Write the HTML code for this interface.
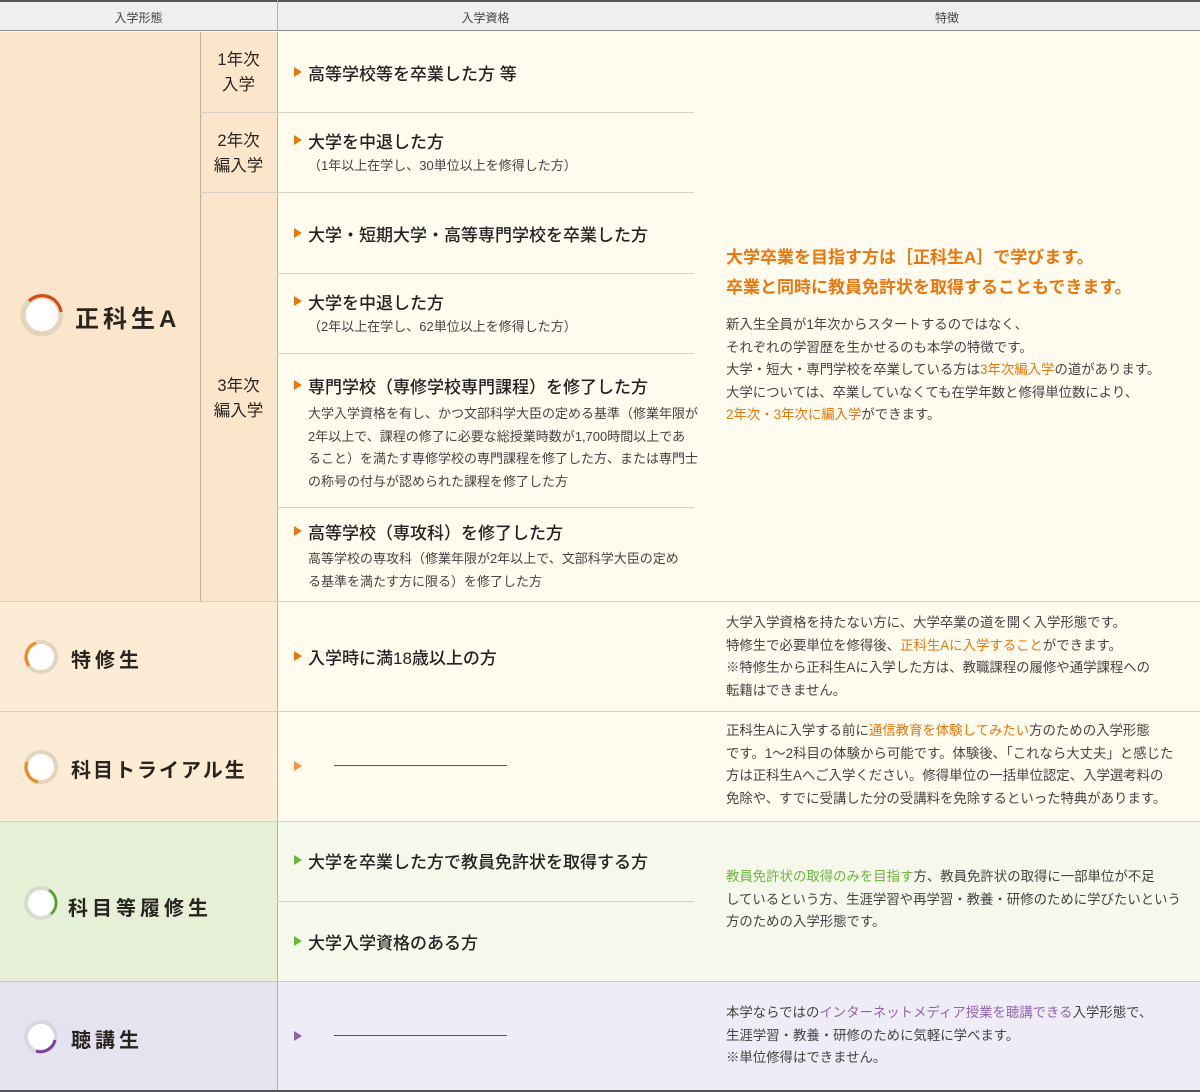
<!DOCTYPE html>
<html><head><meta charset="utf-8"><style>
*{margin:0;padding:0;box-sizing:border-box}
body{width:1200px;height:1092px;position:relative;background:#fffbee;font-family:"Liberation Sans","Noto Sans CJK JP",sans-serif;color:#333;overflow:hidden}
.a{position:absolute}
.hl{position:absolute;height:1px;background:#d6cfc2}
.vl{position:absolute;width:1px;background:#b9b0a2}
.it{position:absolute;left:308px;font-size:17px;font-weight:500;color:#222;white-space:nowrap}
.tri{position:absolute;left:294px;width:0;height:0;border-top:5.5px solid transparent;border-bottom:5.5px solid transparent;border-left:8px solid #e8770e}
.sub{position:absolute;left:308px;font-size:13px;color:#444;line-height:22.5px}
.r{position:absolute;left:726px;font-size:13.4px;color:#444;line-height:22.5px;white-space:nowrap}
.o{color:#e8770e}.g{color:#6db53b}.p{color:#9063a9}
.nm{position:absolute;font-size:20px;font-weight:bold;color:#2a2420;letter-spacing:4px;white-space:nowrap}
.yr{position:absolute;left:200px;width:77px;text-align:center;font-size:16.5px;color:#2a2420;line-height:25px}
</style></head><body>
<div class="a" style="left:0;top:0;width:1200px;height:31px;background:#efefef;border-top:2px solid #555;border-bottom:1px solid #888"></div>
<div class="a" style="left:0;top:9px;width:277px;text-align:center;font-size:12px;color:#444">入学形態</div>
<div class="a" style="left:277px;top:9px;width:417px;text-align:center;font-size:12px;color:#444">入学資格</div>
<div class="a" style="left:694px;top:9px;width:506px;text-align:center;font-size:12px;color:#444">特徴</div>
<div class="vl" style="left:277px;top:0;height:31px"></div>

<div class="a" style="left:0;top:32px;width:277px;height:569px;background:#fbe6cb"></div>
<div class="a" style="left:0;top:601px;width:277px;height:220px;background:#fcecd6"></div>
<div class="a" style="left:0;top:821px;width:277px;height:160px;background:#e6f0d7"></div>
<div class="a" style="left:277px;top:821px;width:923px;height:160px;background:#f5f8eb"></div>
<div class="a" style="left:0;top:981px;width:277px;height:111px;background:#e6e3f1"></div>
<div class="a" style="left:277px;top:981px;width:923px;height:111px;background:#eeecf6"></div>

<div class="vl" style="left:200px;top:32px;height:569px"></div>
<div class="vl" style="left:277px;top:32px;height:1060px"></div>
<div class="hl" style="left:200px;top:112px;width:494px"></div>
<div class="hl" style="left:200px;top:192px;width:494px"></div>
<div class="hl" style="left:277px;top:273px;width:417px"></div>
<div class="hl" style="left:277px;top:353px;width:417px"></div>
<div class="hl" style="left:277px;top:507px;width:417px"></div>
<div class="hl" style="left:0;top:601px;width:1200px"></div>
<div class="hl" style="left:0;top:711px;width:1200px"></div>
<div class="hl" style="left:0;top:821px;width:1200px"></div>
<div class="hl" style="left:277px;top:901px;width:417px"></div>
<div class="hl" style="left:0;top:981px;width:1200px;background:#c9c4d6"></div>
<div class="a" style="left:0;top:1090px;width:1200px;height:2px;background:#555"></div>

<svg class="a" style="left:19px;top:292px" width="46" height="46" viewBox="0 0 46 46"><circle cx="23" cy="23" r="19" fill="none" stroke="#e2d4bf" stroke-width="5"/><circle cx="23" cy="23" r="16" fill="#fff"/><path d="M10 9 A19 19 0 0 1 42 20" fill="none" stroke="#d9480f" stroke-width="3"/></svg>
<svg class="a" style="left:22px;top:638px" width="38" height="38" viewBox="0 0 38 38"><circle cx="19" cy="19" r="15" fill="none" stroke="#e2d4bf" stroke-width="4"/><circle cx="19" cy="19" r="13" fill="#fff"/><path d="M7 28 A15 15 0 0 1 14 5" fill="none" stroke="#f08a1c" stroke-width="3"/></svg>
<svg class="a" style="left:22px;top:748px" width="38" height="38" viewBox="0 0 38 38"><circle cx="19" cy="19" r="15" fill="none" stroke="#e2d4bf" stroke-width="4"/><circle cx="19" cy="19" r="13" fill="#fff"/><path d="M5 14 A15 15 0 0 0 16 34" fill="none" stroke="#f08a1c" stroke-width="3"/></svg>
<svg class="a" style="left:22px;top:884px" width="38" height="38" viewBox="0 0 38 38"><circle cx="19" cy="19" r="15" fill="none" stroke="#d6dccd" stroke-width="4"/><circle cx="19" cy="19" r="13" fill="#fff"/><path d="M27 6 A15 15 0 0 1 29 30" fill="none" stroke="#4fa12b" stroke-width="2.5"/></svg>
<svg class="a" style="left:22px;top:1018px" width="38" height="38" viewBox="0 0 38 38"><circle cx="19" cy="19" r="15" fill="none" stroke="#d8d6e0" stroke-width="4"/><circle cx="19" cy="19" r="13" fill="#fff"/><path d="M33 22 A15 15 0 0 1 14 33" fill="none" stroke="#7a3f99" stroke-width="3"/></svg>

<div class="nm" style="left:75px;top:299px;font-size:24px">正科生A</div>
<div class="nm" style="left:71px;top:644px">特修生</div>
<div class="nm" style="left:71px;top:754px;letter-spacing:2px">科目トライアル生</div>
<div class="nm" style="left:68px;top:892px">科目等履修生</div>
<div class="nm" style="left:71px;top:1024px">聴講生</div>

<div class="yr" style="top:48px">1年次<br>入学</div>
<div class="yr" style="top:129px">2年次<br>編入学</div>
<div class="yr" style="top:374px">3年次<br>編入学</div>

<div class="tri" style="top:67px"></div><div class="it" style="top:60px">高等学校等を卒業した方 等</div>
<div class="tri" style="top:135px"></div><div class="it" style="top:128px">大学を中退した方</div>
<div class="sub" style="top:155px">（1年以上在学し、30単位以上を修得した方）</div>
<div class="tri" style="top:228px"></div><div class="it" style="top:221px">大学・短期大学・高等専門学校を卒業した方</div>
<div class="tri" style="top:296px"></div><div class="it" style="top:289px">大学を中退した方</div>
<div class="sub" style="top:316px">（2年以上在学し、62単位以上を修得した方）</div>
<div class="tri" style="top:380px"></div><div class="it" style="top:373px">専門学校（専修学校専門課程）を修了した方</div>
<div class="sub" style="top:403px;width:390px">大学入学資格を有し、かつ文部科学大臣の定める基準（修業年限が2年以上で、課程の修了に必要な総授業時数が1,700時間以上であること）を満たす専修学校の専門課程を修了した方、または専門士の称号の付与が認められた課程を修了した方</div>
<div class="tri" style="top:526px"></div><div class="it" style="top:519px">高等学校（専攻科）を修了した方</div>
<div class="sub" style="top:548px;width:380px">高等学校の専攻科（修業年限が2年以上で、文部科学大臣の定める基準を満たす方に限る）を修了した方</div>

<div class="tri" style="top:651px"></div><div class="it" style="top:644px">入学時に満18歳以上の方</div>
<div class="tri" style="top:761px;border-left-color:#f0944a"></div>
<div class="a" style="left:334px;top:765px;width:173px;height:1px;background:#555"></div>
<div class="tri" style="top:855px;border-left-color:#6db53b"></div><div class="it" style="top:848px">大学を卒業した方で教員免許状を取得する方</div>
<div class="tri" style="top:936px;border-left-color:#6db53b"></div><div class="it" style="top:929px">大学入学資格のある方</div>
<div class="tri" style="top:1031px;border-left-color:#9063a9"></div>
<div class="a" style="left:334px;top:1035px;width:173px;height:1px;background:#555"></div>

<div class="r o" style="top:243px;font-size:17px;font-weight:bold;line-height:30px">大学卒業を目指す方は［正科生A］で学びます。<br>卒業と同時に教員免許状を取得することもできます。</div>
<div class="r" style="top:314px">新入生全員が1年次からスタートするのではなく、<br>それぞれの学習歴を生かせるのも本学の特徴です。<br>大学・短大・専門学校を卒業している方は<span class="o">3年次編入学</span>の道があります。<br>大学については、卒業していなくても在学年数と修得単位数により、<br><span class="o">2年次・3年次に編入学</span>ができます。</div>
<div class="r" style="top:612px">大学入学資格を持たない方に、大学卒業の道を開く入学形態です。<br>特修生で必要単位を修得後、<span class="o">正科生Aに入学すること</span>ができます。<br>※特修生から正科生Aに入学した方は、教職課程の履修や通学課程への<br>転籍はできません。</div>
<div class="r" style="top:720px">正科生Aに入学する前に<span class="o">通信教育を体験してみたい</span>方のための入学形態<br>です。1～2科目の体験から可能です。体験後、「これなら大丈夫」と感じた<br>方は正科生Aへご入学ください。修得単位の一括単位認定、入学選考料の<br>免除や、すでに受講した分の受講料を免除するといった特典があります。</div>
<div class="r" style="top:866px"><span class="g">教員免許状の取得のみを目指す</span>方、教員免許状の取得に一部単位が不足<br>しているという方、生涯学習や再学習・教養・研修のために学びたいという<br>方のための入学形態です。</div>
<div class="r" style="top:1002px">本学ならではの<span class="p">インターネットメディア授業を聴講できる</span>入学形態で、<br>生涯学習・教養・研修のために気軽に学べます。<br>※単位修得はできません。</div>
</body></html>
